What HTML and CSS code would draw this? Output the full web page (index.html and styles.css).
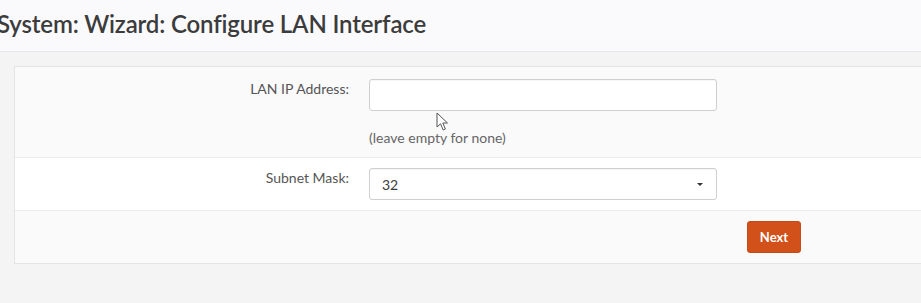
FILE: index.html
```html
<!DOCTYPE html>
<html lang="en">
<head>
  <meta charset="UTF-8" />
  <title>System: Wizard: Configure LAN Interface</title>
  <link rel="stylesheet" href="styles.css">
</head>
<body>
  <header class="page-head">
    <h1>System: Wizard: Configure LAN Interface</h1>
  </header>
  <main>
    <form class="card">
      <div class="form-row alt">
        <label class="field-label" for="lanip">LAN IP Address:</label>
        <div class="field">
          <input id="lanip" type="text" class="input" />
          <p class="help">(leave empty for none)</p>
        </div>
        <svg class="cursor" width="13" height="20" viewBox="0 0 13 20">
          <path d="M1 1 L1 15 L4.5 11.8 L7.2 18 L9.4 17 L6.8 11 L11.5 11 Z" fill="#fff" stroke="#555" stroke-width="1" stroke-linejoin="round"/>
        </svg>
      </div>
      <div class="form-row">
        <label class="field-label" for="mask">Subnet Mask:</label>
        <div class="field">
          <div class="select" id="mask">
            <span>32</span>
            <span class="caret"></span>
          </div>
        </div>
      </div>
      <div class="form-row alt actions">
        <div></div>
        <div class="field right">
          <button type="button" class="btn">Next</button>
        </div>
      </div>
    </form>
  </main>
</body>
</html>
```

FILE: styles.css
```css
:root {
  --bg: #f4f4f4;
  --head-bg: #fafafc;
  --row-alt: #fafafb;
  --border: #e4e4e4;
  --text: #3c3c3c;
  --muted: #666;
  --orange: #d2501a;
}
* { box-sizing: border-box; margin: 0; padding: 0; }
body {
  font-family: 'Lato', 'Open Sans', sans-serif;
  background: var(--bg);
  color: var(--text);
  overflow: hidden;
}
.page-head {
  height: 52px;
  background: var(--head-bg);
  border-bottom: 1px solid #e8e8ea;
  padding-top: 9px;
}
.page-head h1 {
  margin-left: -3px;
  font-size: 24px;
  font-weight: 600;
  color: var(--text);
  letter-spacing: -0.15px;
}
main {
  padding: 14px 0 0 14px;
}
.card {
  background: #fff;
  border: 1px solid var(--border);
  border-right: none;
}
.form-row {
  position: relative;
  display: grid;
  grid-template-columns: 354px 348px;
  padding: 10px 0;
  border-top: 1px solid #ececec;
}
.form-row:first-child { border-top: none; padding-top: 12px; height: 90px; }
.form-row.alt { background: var(--row-alt); }
.field-label {
  text-align: right;
  padding-right: 20px;
  padding-top: 1px;
  font-size: 14px;
  color: #555;
}
.input, .select {
  display: flex;
  align-items: center;
  width: 348px;
  height: 32px;
  border: 1px solid #cfcfcf;
  border-radius: 3px;
  background: #fff;
  box-shadow: inset 0 1px 1px rgba(0,0,0,0.04);
  font: inherit;
  font-size: 14px;
  color: var(--text);
  padding: 0 12px;
}
.help {
  margin-top: 18px;
  font-size: 14px;
  color: var(--muted);
}
.select { justify-content: space-between; }
.caret {
  width: 0;
  height: 0;
  border-left: 3px solid transparent;
  border-right: 3px solid transparent;
  border-top: 3px solid #333;
  margin-right: 1px;
}
.form-row.actions { height: 53px; }
.field.right {
  display: flex;
  justify-content: flex-end;
  width: 432px;
}
.btn {
  background: var(--orange);
  color: #fff;
  border: 1px solid #c44a16;
  border-radius: 3px;
  font-family: 'Lato', sans-serif;
  font-weight: 700;
  font-size: 13px;
  width: 54px;
  height: 32px;
}
.cursor {
  position: absolute;
  left: 421px;
  top: 45px;
}
```
